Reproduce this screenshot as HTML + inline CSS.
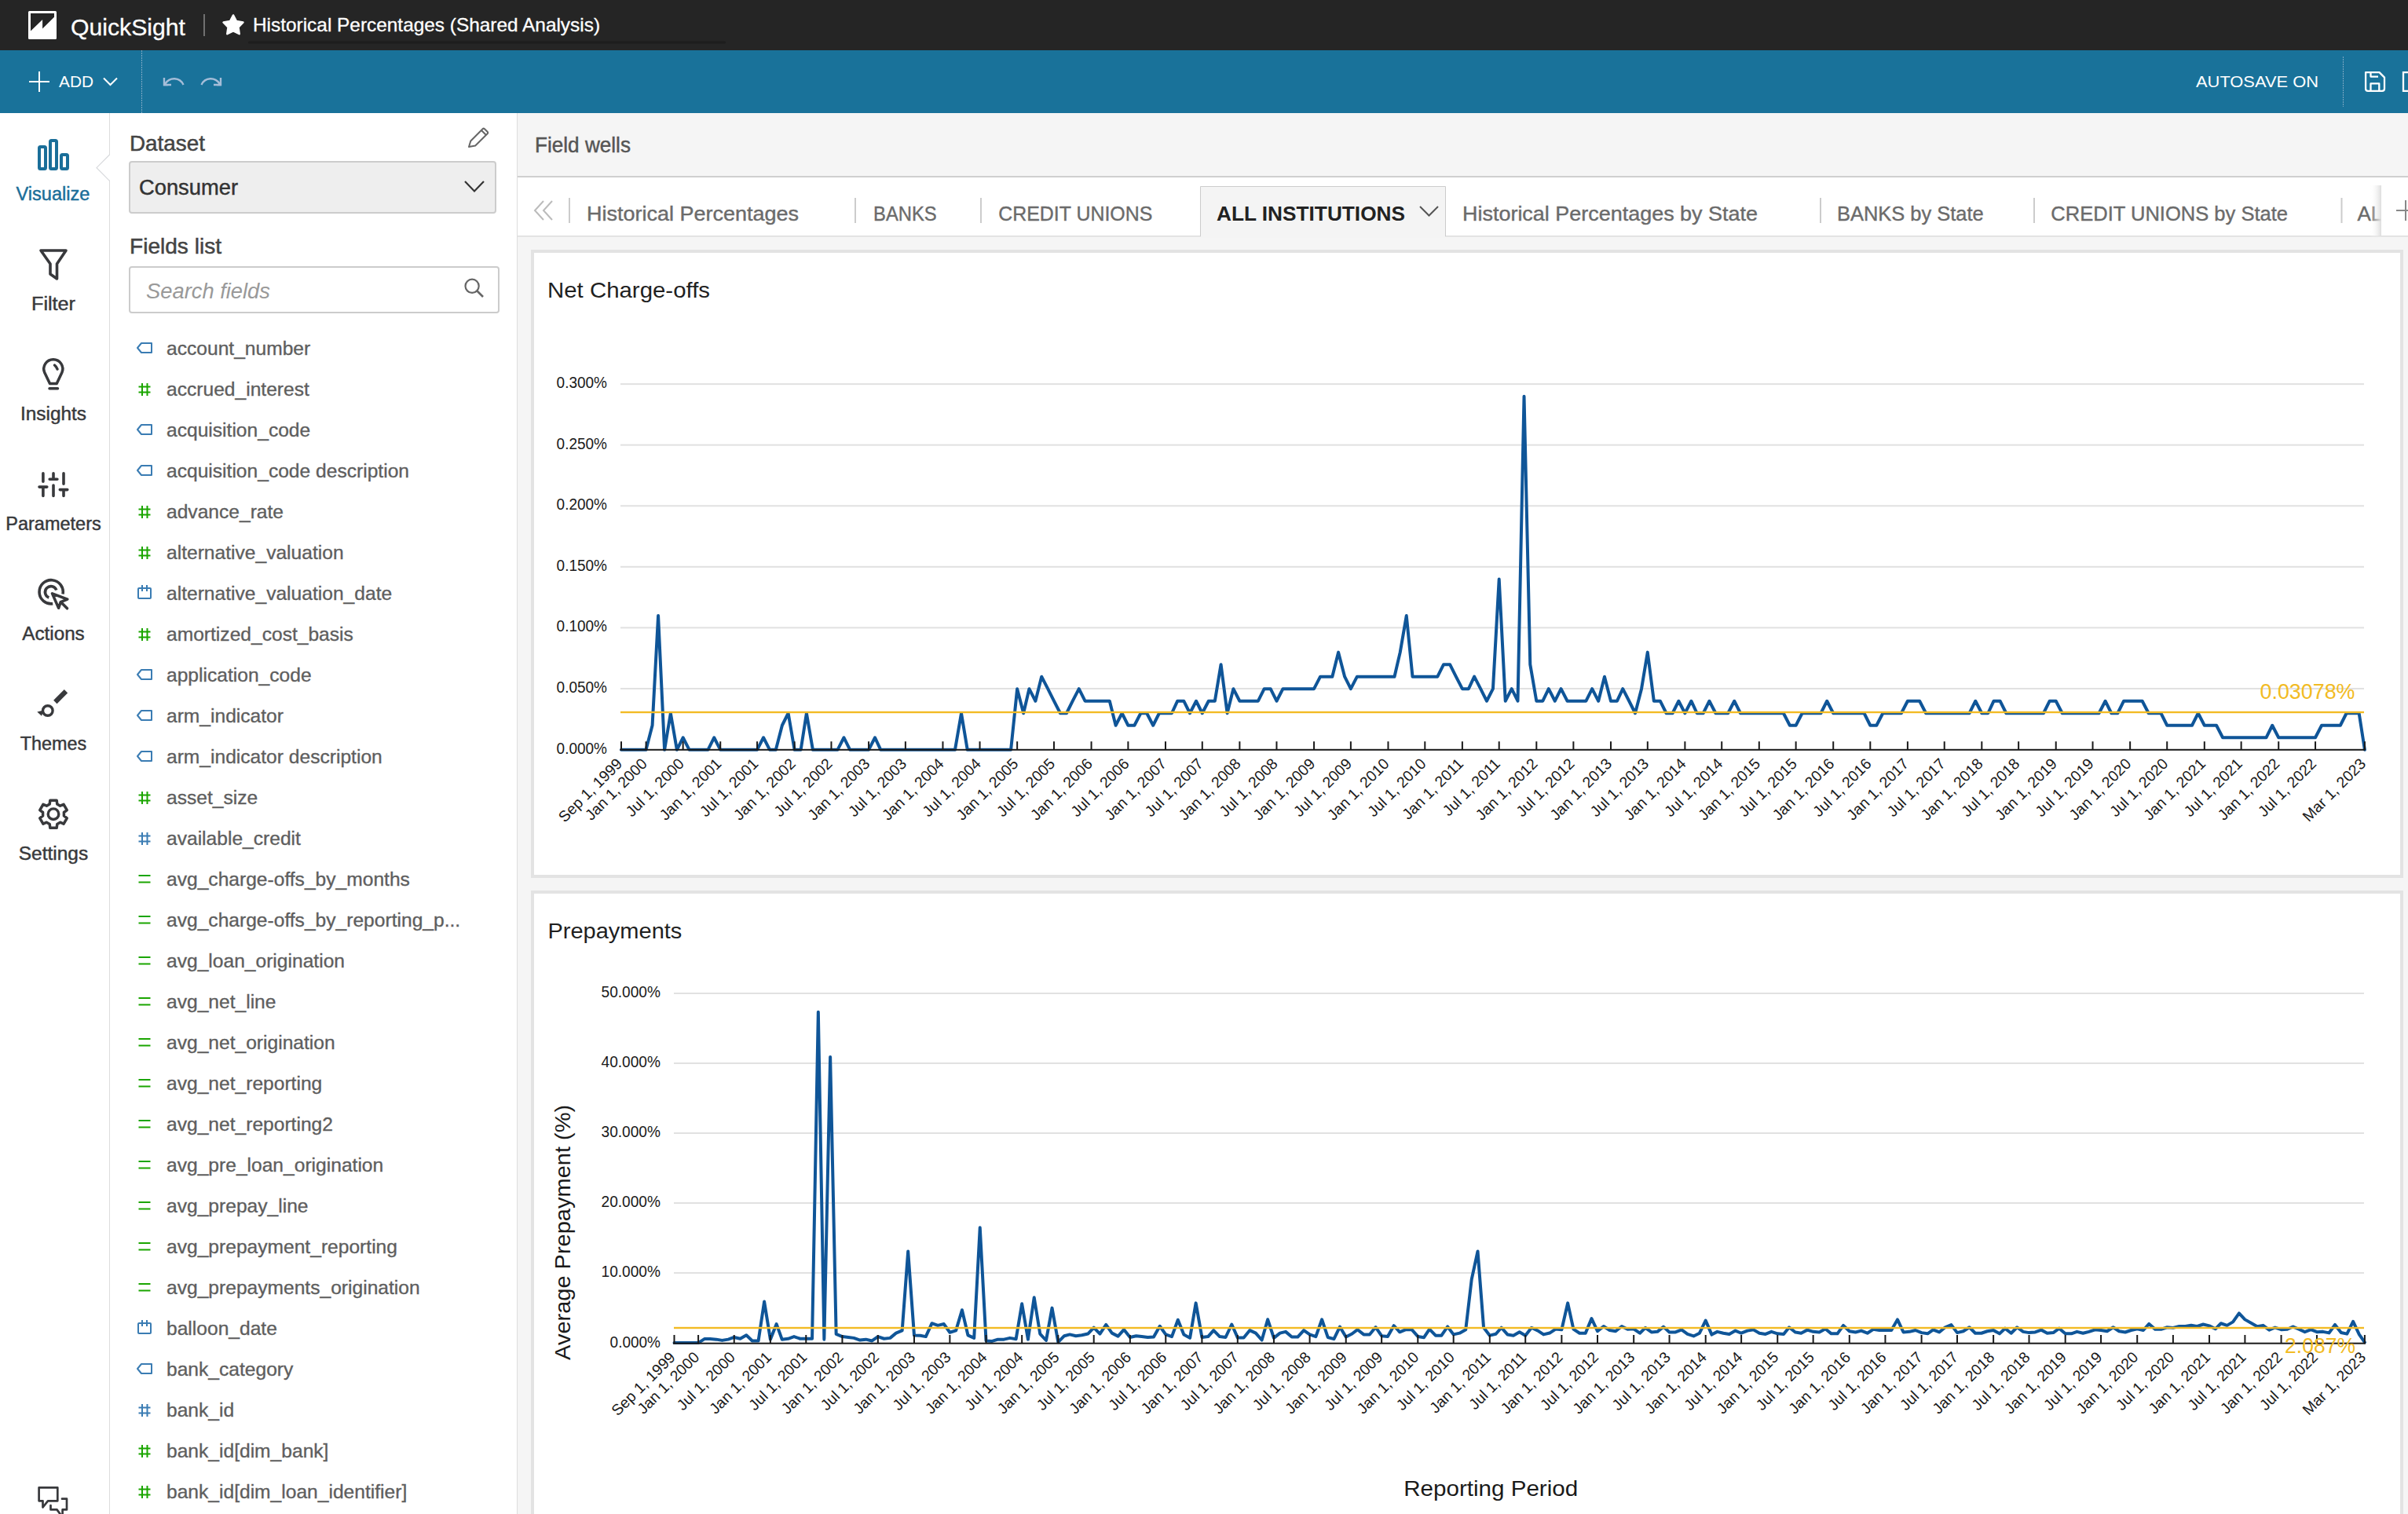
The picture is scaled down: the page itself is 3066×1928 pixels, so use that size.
<!DOCTYPE html>
<html><head><meta charset="utf-8"><title>QuickSight</title><style>html,body{margin:0;padding:0;width:3066px;height:1928px;overflow:hidden;background:#f4f4f4;font-family:"Liberation Sans",sans-serif}svg{display:block}</style></head><body>
<svg width="3066" height="1928" viewBox="0 0 3066 1928" font-family='"Liberation Sans", sans-serif'>
<rect x="0" y="0" width="3066" height="1928" fill="#f5f5f5"/>
<rect x="0" y="0" width="3066" height="64" fill="#252525"/>
<rect x="36" y="14" width="36" height="36" rx="1.5" fill="#ffffff"/>
<path d="M39,17 L69,17 L69,21.7 L54.1,36.6 L54.1,25 L39,39.6 Z" fill="#252525"/>
<text x="90" y="44.5" font-size="30" fill="#ffffff" stroke="#ffffff" stroke-width="0.3" textLength="146" lengthAdjust="spacingAndGlyphs">QuickSight</text>
<rect x="259" y="18" width="2" height="28" fill="#707070"/>
<polygon points="297.00,19.40 301.06,27.02 309.55,28.52 303.56,34.73 304.76,43.28 297.00,39.50 289.24,43.28 290.44,34.73 284.45,28.52 292.94,27.02" fill="#ffffff" stroke="#ffffff" stroke-width="2.4" stroke-linejoin="round"/>
<text x="322" y="40" font-size="24" fill="#ffffff" stroke="#ffffff" stroke-width="0.3" textLength="442" lengthAdjust="spacingAndGlyphs">Historical Percentages (Shared Analysis)</text>
<rect x="316" y="52.5" width="608" height="3" rx="1.5" fill="#1d1d1d"/>
<rect x="0" y="64" width="3066" height="80" fill="#19729a"/>
<path d="M50,91 V117 M37,104 H63" stroke="#ffffff" stroke-width="2" fill="none"/>
<text x="75" y="111" font-size="20" fill="#ffffff" textLength="44" lengthAdjust="spacingAndGlyphs">ADD</text>
<path d="M132,99.5 L140.5,108 L149,99.5" stroke="#ffffff" stroke-width="2" fill="none"/>
<line x1="180.5" y1="64" x2="180.5" y2="144" stroke="#7ea9c4" stroke-width="1" stroke-dasharray="2,1"/>
<path d="M209,99 V108 H218 M210.5,106.5 C216,98 229,98 233.5,108" stroke="#a5bdd8" stroke-width="2.4" fill="none"/>
<path d="M208,103 V109.2 H214 Z" fill="#a5bdd8"/>
<path d="M281,99 V108 H272 M279.5,106.5 C274,98 261,98 256.5,108" stroke="#a5bdd8" stroke-width="2.4" fill="none"/>
<path d="M282,103 V109.2 H276 Z" fill="#a5bdd8"/>
<text x="2796" y="111" font-size="20" fill="#ffffff" textLength="156" lengthAdjust="spacingAndGlyphs">AUTOSAVE ON</text>
<line x1="2983.5" y1="72" x2="2983.5" y2="136" stroke="#7ea9c4" stroke-width="1" stroke-dasharray="2,1"/>
<path d="M3012.1,92.1 H3029.5 L3036,98.6 V113 Q3036,115.9 3033,115.9 H3015 Q3012.1,115.9 3012.1,113 Z M3018.5,92 V97.6 H3028 M3018.5,116 V106.4 H3029.3 V116" stroke="#ffffff" stroke-width="2.3" fill="none" stroke-linejoin="round"/>
<path d="M3066,92.1 H3060 V115.9 H3066" stroke="#ffffff" stroke-width="2.3" fill="none"/>
<rect x="0" y="144" width="139" height="1784" fill="#ffffff"/>
<rect x="139" y="144" width="519" height="1784" fill="#ffffff"/>
<rect x="139" y="144" width="1" height="1784" fill="#dcdcdc"/>
<rect x="658" y="144" width="1" height="1784" fill="#dddddd"/>
<rect x="136" y="197.5" width="6" height="32" fill="#ffffff"/>
<path d="M139.5,197 L123,213.7 L139.5,230.3" fill="none" stroke="#d8dadd" stroke-width="1.2"/>
<rect x="50" y="187" width="8" height="28" rx="1.5" fill="none" stroke="#1a6e99" stroke-width="4"/>
<rect x="64" y="179" width="8" height="36" rx="1.5" fill="none" stroke="#1a6e99" stroke-width="4"/>
<rect x="78" y="197" width="8" height="18" rx="1.5" fill="none" stroke="#1a6e99" stroke-width="4"/>
<text x="67.5" y="255" font-size="23.5" fill="#1a6e99" stroke="#1a6e99" stroke-width="0.45" text-anchor="middle" textLength="94" lengthAdjust="spacingAndGlyphs">Visualize</text>
<path d="M52,319 L84,319 L72.5,336 L72.5,355 L64,349 L64,336 Z" fill="none" stroke="#38393c" stroke-width="3.6" stroke-linejoin="round"/>
<text x="68" y="394.6" font-size="23.5" fill="#38393c" stroke="#38393c" stroke-width="0.45" text-anchor="middle" textLength="56" lengthAdjust="spacingAndGlyphs">Filter</text>
<path d="M63.5,488.5 L56.8,474.5 A12,12 0 1 1 78.8,474.5 L72.2,488.5 Z" fill="none" stroke="#38393c" stroke-width="3.5" stroke-linejoin="round"/>
<path d="M63,494.8 H73.5 M69.5,465 Q72,467 73,470" stroke="#38393c" stroke-width="3.5" stroke-linecap="round" fill="none"/>
<text x="68" y="535" font-size="23.5" fill="#38393c" stroke="#38393c" stroke-width="0.45" text-anchor="middle" textLength="84" lengthAdjust="spacingAndGlyphs">Insights</text>
<path d="M54.9,602.7 V613.3 M50,620.1 H59.8 M54.9,620.1 V631.4 M68,602.7 V610.3 M63.2,610.3 H72.9 M68,618 V631.4 M81,602.7 V616.2 M76.3,623.6 H85.8 M81,623.6 V631.4" stroke="#38393c" stroke-width="3.6" stroke-linecap="round" fill="none"/>
<text x="68" y="675" font-size="23.5" fill="#38393c" stroke="#38393c" stroke-width="0.45" text-anchor="middle" textLength="121.5" lengthAdjust="spacingAndGlyphs">Parameters</text>
<path d="M67.2,768.7 A15.1,15.1 0 1 1 80,756.5" stroke="#38393c" stroke-width="3.6" fill="none"/>
<path d="M62.3,761 A7.4,7.4 0 1 1 71.8,751.5" stroke="#38393c" stroke-width="3.6" fill="none"/>
<path d="M66.5,755.8 L85.8,763.2 L77.3,766.6 L74.6,774.3 Z" stroke="#38393c" stroke-width="3.5" fill="none" stroke-linejoin="round"/>
<path d="M77.5,766.8 L85.5,774.8" stroke="#38393c" stroke-width="3.6" fill="none" stroke-linecap="round"/>
<text x="68" y="815" font-size="23.5" fill="#38393c" stroke="#38393c" stroke-width="0.45" text-anchor="middle" textLength="79.5" lengthAdjust="spacingAndGlyphs">Actions</text>
<path d="M70.3,894 L84,880.3" stroke="#38393c" stroke-width="6.2" stroke-linecap="butt" fill="none"/>
<circle cx="60.8" cy="905" r="6.3" stroke="#38393c" stroke-width="3.4" fill="none"/>
<path d="M55.5,904.5 L47.3,906.4 L53,911.8 Z" fill="#38393c"/>
<text x="68" y="955" font-size="23.5" fill="#38393c" stroke="#38393c" stroke-width="0.45" text-anchor="middle" textLength="84.5" lengthAdjust="spacingAndGlyphs">Themes</text>
<polygon points="63.81,1019.19 72.19,1019.19 72.79,1023.97 76.63,1026.19 81.06,1024.32 85.26,1031.58 81.42,1034.48 81.42,1038.92 85.26,1041.82 81.06,1049.08 76.63,1047.21 72.79,1049.43 72.19,1054.21 63.81,1054.21 63.21,1049.43 59.37,1047.21 54.94,1049.08 50.74,1041.82 54.58,1038.92 54.58,1034.48 50.74,1031.58 54.94,1024.32 59.37,1026.19 63.21,1023.97" fill="none" stroke="#38393c" stroke-width="3.5" stroke-linejoin="round"/>
<circle cx="68" cy="1036.7" r="6.8" fill="none" stroke="#38393c" stroke-width="3.4"/>
<text x="68" y="1095" font-size="23.5" fill="#38393c" stroke="#38393c" stroke-width="0.45" text-anchor="middle" textLength="88.4" lengthAdjust="spacingAndGlyphs">Settings</text>
<path d="M49.6,1894.4 H73.3 V1911.3 H61 L54.5,1919.5 V1911.3 H49.6 Z" stroke="#38393c" stroke-width="2.7" fill="none" stroke-linejoin="round"/>
<path d="M79,1908.7 H85 V1922.4 H79.6 V1930 M64.5,1917 V1922.4 H72.5 L78,1930" stroke="#38393c" stroke-width="2.7" fill="none" stroke-linejoin="round" stroke-linecap="round"/>
<text x="165" y="191.5" font-size="28" fill="#444444" stroke="#444444" stroke-width="0.5" textLength="96" lengthAdjust="spacingAndGlyphs">Dataset</text>
<path d="M597,187 L599.3,179.5 L614.5,164.2 Q615.7,163 617,164.2 L620.6,167.8 Q621.8,169 620.6,170.3 L605.2,185.5 Z M613,166 L618.5,171.5" stroke="#666" stroke-width="2" fill="none" stroke-linejoin="round"/>
<rect x="165" y="206" width="466" height="65" rx="3" fill="#eeeeee" stroke="#cccccc" stroke-width="2"/>
<text x="177" y="248" font-size="27" fill="#333333" stroke="#333333" stroke-width="0.45" textLength="126" lengthAdjust="spacingAndGlyphs">Consumer</text>
<path d="M592,231 L604,243.5 L616,231" stroke="#333" stroke-width="2.2" fill="none"/>
<text x="165" y="323" font-size="28" fill="#444444" stroke="#444444" stroke-width="0.5" textLength="117" lengthAdjust="spacingAndGlyphs">Fields list</text>
<rect x="165" y="340" width="470" height="58" rx="3" fill="#ffffff" stroke="#cccccc" stroke-width="2"/>
<text x="186" y="380" font-size="27" fill="#999999" font-style="italic" textLength="158" lengthAdjust="spacingAndGlyphs">Search fields</text>
<circle cx="601.1" cy="364.3" r="8.6" fill="none" stroke="#666" stroke-width="2.2"/><path d="M607.5,370.5 L615,378" stroke="#666" stroke-width="2.6" fill="none"/>
<path d="M175,443 L180,437 H193 V449 H180 Z" fill="none" stroke="#3a7cb3" stroke-width="2" stroke-linejoin="round"/>
<text x="212" y="452" font-size="24.6" fill="#5e5e5e" stroke="#5e5e5e" stroke-width="0.35">account_number</text>
<path d="M181,488 V504 M187.5,488 V504 M176.5,492.5 H191.5 M176.5,499.5 H191.5" stroke="#1aa500" stroke-width="2" fill="none"/>
<text x="212" y="504" font-size="24.6" fill="#5e5e5e" stroke="#5e5e5e" stroke-width="0.35">accrued_interest</text>
<path d="M175,547 L180,541 H193 V553 H180 Z" fill="none" stroke="#3a7cb3" stroke-width="2" stroke-linejoin="round"/>
<text x="212" y="556" font-size="24.6" fill="#5e5e5e" stroke="#5e5e5e" stroke-width="0.35">acquisition_code</text>
<path d="M175,599 L180,593 H193 V605 H180 Z" fill="none" stroke="#3a7cb3" stroke-width="2" stroke-linejoin="round"/>
<text x="212" y="608" font-size="24.6" fill="#5e5e5e" stroke="#5e5e5e" stroke-width="0.35">acquisition_code description</text>
<path d="M181,644 V660 M187.5,644 V660 M176.5,648.5 H191.5 M176.5,655.5 H191.5" stroke="#1aa500" stroke-width="2" fill="none"/>
<text x="212" y="660" font-size="24.6" fill="#5e5e5e" stroke="#5e5e5e" stroke-width="0.35">advance_rate</text>
<path d="M181,696 V712 M187.5,696 V712 M176.5,700.5 H191.5 M176.5,707.5 H191.5" stroke="#1aa500" stroke-width="2" fill="none"/>
<text x="212" y="712" font-size="24.6" fill="#5e5e5e" stroke="#5e5e5e" stroke-width="0.35">alternative_valuation</text>
<rect x="176" y="749" width="16" height="13" rx="1" fill="none" stroke="#3a7cb3" stroke-width="2"/>
<path d="M181,745 V753 M187,745 V753" stroke="#3a7cb3" stroke-width="2" fill="none"/>
<text x="212" y="764" font-size="24.6" fill="#5e5e5e" stroke="#5e5e5e" stroke-width="0.35">alternative_valuation_date</text>
<path d="M181,800 V816 M187.5,800 V816 M176.5,804.5 H191.5 M176.5,811.5 H191.5" stroke="#1aa500" stroke-width="2" fill="none"/>
<text x="212" y="816" font-size="24.6" fill="#5e5e5e" stroke="#5e5e5e" stroke-width="0.35">amortized_cost_basis</text>
<path d="M175,859 L180,853 H193 V865 H180 Z" fill="none" stroke="#3a7cb3" stroke-width="2" stroke-linejoin="round"/>
<text x="212" y="868" font-size="24.6" fill="#5e5e5e" stroke="#5e5e5e" stroke-width="0.35">application_code</text>
<path d="M175,911 L180,905 H193 V917 H180 Z" fill="none" stroke="#3a7cb3" stroke-width="2" stroke-linejoin="round"/>
<text x="212" y="920" font-size="24.6" fill="#5e5e5e" stroke="#5e5e5e" stroke-width="0.35">arm_indicator</text>
<path d="M175,963 L180,957 H193 V969 H180 Z" fill="none" stroke="#3a7cb3" stroke-width="2" stroke-linejoin="round"/>
<text x="212" y="972" font-size="24.6" fill="#5e5e5e" stroke="#5e5e5e" stroke-width="0.35">arm_indicator description</text>
<path d="M181,1008 V1024 M187.5,1008 V1024 M176.5,1012.5 H191.5 M176.5,1019.5 H191.5" stroke="#1aa500" stroke-width="2" fill="none"/>
<text x="212" y="1024" font-size="24.6" fill="#5e5e5e" stroke="#5e5e5e" stroke-width="0.35">asset_size</text>
<path d="M181,1060 V1076 M187.5,1060 V1076 M176.5,1064.5 H191.5 M176.5,1071.5 H191.5" stroke="#3a7cb3" stroke-width="2" fill="none"/>
<text x="212" y="1076" font-size="24.6" fill="#5e5e5e" stroke="#5e5e5e" stroke-width="0.35">available_credit</text>
<path d="M176.5,1115 H191.5 M176.5,1123.5 H191.5" stroke="#1aa500" stroke-width="2" fill="none"/>
<text x="212" y="1128" font-size="24.6" fill="#5e5e5e" stroke="#5e5e5e" stroke-width="0.35">avg_charge-offs_by_months</text>
<path d="M176.5,1167 H191.5 M176.5,1175.5 H191.5" stroke="#1aa500" stroke-width="2" fill="none"/>
<text x="212" y="1180" font-size="24.6" fill="#5e5e5e" stroke="#5e5e5e" stroke-width="0.35">avg_charge-offs_by_reporting_p...</text>
<path d="M176.5,1219 H191.5 M176.5,1227.5 H191.5" stroke="#1aa500" stroke-width="2" fill="none"/>
<text x="212" y="1232" font-size="24.6" fill="#5e5e5e" stroke="#5e5e5e" stroke-width="0.35">avg_loan_origination</text>
<path d="M176.5,1271 H191.5 M176.5,1279.5 H191.5" stroke="#1aa500" stroke-width="2" fill="none"/>
<text x="212" y="1284" font-size="24.6" fill="#5e5e5e" stroke="#5e5e5e" stroke-width="0.35">avg_net_line</text>
<path d="M176.5,1323 H191.5 M176.5,1331.5 H191.5" stroke="#1aa500" stroke-width="2" fill="none"/>
<text x="212" y="1336" font-size="24.6" fill="#5e5e5e" stroke="#5e5e5e" stroke-width="0.35">avg_net_origination</text>
<path d="M176.5,1375 H191.5 M176.5,1383.5 H191.5" stroke="#1aa500" stroke-width="2" fill="none"/>
<text x="212" y="1388" font-size="24.6" fill="#5e5e5e" stroke="#5e5e5e" stroke-width="0.35">avg_net_reporting</text>
<path d="M176.5,1427 H191.5 M176.5,1435.5 H191.5" stroke="#1aa500" stroke-width="2" fill="none"/>
<text x="212" y="1440" font-size="24.6" fill="#5e5e5e" stroke="#5e5e5e" stroke-width="0.35">avg_net_reporting2</text>
<path d="M176.5,1479 H191.5 M176.5,1487.5 H191.5" stroke="#1aa500" stroke-width="2" fill="none"/>
<text x="212" y="1492" font-size="24.6" fill="#5e5e5e" stroke="#5e5e5e" stroke-width="0.35">avg_pre_loan_origination</text>
<path d="M176.5,1531 H191.5 M176.5,1539.5 H191.5" stroke="#1aa500" stroke-width="2" fill="none"/>
<text x="212" y="1544" font-size="24.6" fill="#5e5e5e" stroke="#5e5e5e" stroke-width="0.35">avg_prepay_line</text>
<path d="M176.5,1583 H191.5 M176.5,1591.5 H191.5" stroke="#1aa500" stroke-width="2" fill="none"/>
<text x="212" y="1596" font-size="24.6" fill="#5e5e5e" stroke="#5e5e5e" stroke-width="0.35">avg_prepayment_reporting</text>
<path d="M176.5,1635 H191.5 M176.5,1643.5 H191.5" stroke="#1aa500" stroke-width="2" fill="none"/>
<text x="212" y="1648" font-size="24.6" fill="#5e5e5e" stroke="#5e5e5e" stroke-width="0.35">avg_prepayments_origination</text>
<rect x="176" y="1685" width="16" height="13" rx="1" fill="none" stroke="#3a7cb3" stroke-width="2"/>
<path d="M181,1681 V1689 M187,1681 V1689" stroke="#3a7cb3" stroke-width="2" fill="none"/>
<text x="212" y="1700" font-size="24.6" fill="#5e5e5e" stroke="#5e5e5e" stroke-width="0.35">balloon_date</text>
<path d="M175,1743 L180,1737 H193 V1749 H180 Z" fill="none" stroke="#3a7cb3" stroke-width="2" stroke-linejoin="round"/>
<text x="212" y="1752" font-size="24.6" fill="#5e5e5e" stroke="#5e5e5e" stroke-width="0.35">bank_category</text>
<path d="M181,1788 V1804 M187.5,1788 V1804 M176.5,1792.5 H191.5 M176.5,1799.5 H191.5" stroke="#3a7cb3" stroke-width="2" fill="none"/>
<text x="212" y="1804" font-size="24.6" fill="#5e5e5e" stroke="#5e5e5e" stroke-width="0.35">bank_id</text>
<path d="M181,1840 V1856 M187.5,1840 V1856 M176.5,1844.5 H191.5 M176.5,1851.5 H191.5" stroke="#1aa500" stroke-width="2" fill="none"/>
<text x="212" y="1856" font-size="24.6" fill="#5e5e5e" stroke="#5e5e5e" stroke-width="0.35">bank_id[dim_bank]</text>
<path d="M181,1892 V1908 M187.5,1892 V1908 M176.5,1896.5 H191.5 M176.5,1903.5 H191.5" stroke="#1aa500" stroke-width="2" fill="none"/>
<text x="212" y="1908" font-size="24.6" fill="#5e5e5e" stroke="#5e5e5e" stroke-width="0.35">bank_id[dim_loan_identifier]</text>
<rect x="659" y="144" width="2407" height="81" fill="#f5f5f5"/>
<text x="681" y="193.6" font-size="27" fill="#555555" stroke="#555555" stroke-width="0.45" textLength="122" lengthAdjust="spacingAndGlyphs">Field wells</text>
<rect x="659" y="224" width="2407" height="2" fill="#cfcfcf"/>
<rect x="659" y="226" width="2407" height="74" fill="#ffffff"/>
<rect x="659" y="300" width="2407" height="1.5" fill="#dddddd"/>
<path d="M692,256 L681,268 L692,280 M703,256 L692,268 L703,280" stroke="#bbbbbb" stroke-width="2" fill="none"/>
<rect x="724" y="252" width="2" height="32" fill="#cccccc"/>
<rect x="1088" y="252" width="2" height="32" fill="#cccccc"/>
<rect x="1248" y="252" width="2" height="32" fill="#cccccc"/>
<rect x="2317" y="252" width="2" height="32" fill="#cccccc"/>
<rect x="2589" y="252" width="2" height="32" fill="#cccccc"/>
<rect x="2980.5" y="252" width="2" height="32" fill="#cccccc"/>
<text x="747" y="281" font-size="26" fill="#6b6b6b" stroke="#6b6b6b" stroke-width="0.4" textLength="270" lengthAdjust="spacingAndGlyphs">Historical Percentages</text>
<text x="1112" y="281" font-size="26" fill="#6b6b6b" stroke="#6b6b6b" stroke-width="0.4" textLength="80.7" lengthAdjust="spacingAndGlyphs">BANKS</text>
<text x="1271.3" y="281" font-size="26" fill="#6b6b6b" stroke="#6b6b6b" stroke-width="0.4" textLength="196" lengthAdjust="spacingAndGlyphs">CREDIT UNIONS</text>
<path d="M1528.5,301 V237.5 H1840.5 V301" fill="#f4f4f4" stroke="#cccccc" stroke-width="1"/>
<rect x="1529" y="299.5" width="311" height="3" fill="#f4f4f4"/>
<text x="1549" y="281" font-size="26" fill="#222222" font-weight="bold" textLength="240" lengthAdjust="spacingAndGlyphs">ALL INSTITUTIONS</text>
<path d="M1808,263 L1819.5,274.5 L1831,263" stroke="#555" stroke-width="2" fill="none"/>
<text x="1862" y="281" font-size="26" fill="#6b6b6b" stroke="#6b6b6b" stroke-width="0.4" textLength="376" lengthAdjust="spacingAndGlyphs">Historical Percentages by State</text>
<text x="2339" y="281" font-size="26" fill="#6b6b6b" stroke="#6b6b6b" stroke-width="0.4" textLength="186.6" lengthAdjust="spacingAndGlyphs">BANKS by State</text>
<text x="2611.3" y="281" font-size="26" fill="#6b6b6b" stroke="#6b6b6b" stroke-width="0.4" textLength="301.7" lengthAdjust="spacingAndGlyphs">CREDIT UNIONS by State</text>
<clipPath id="alclip"><rect x="2990" y="226" width="42" height="74"/></clipPath>
<text x="3001.5" y="281" font-size="26" fill="#6b6b6b" stroke="#6b6b6b" stroke-width="0.4" clip-path="url(#alclip)">ALL</text>
<defs><linearGradient id="fade" x1="0" x2="1" y1="0" y2="0"><stop offset="0" stop-color="#ffffff" stop-opacity="0"/><stop offset="1" stop-color="#dddddd"/></linearGradient></defs>
<rect x="3018" y="236" width="14" height="65" fill="url(#fade)"/>
<path d="M3051,268 H3066 M3063,255 V281" stroke="#888" stroke-width="2" fill="none"/>
<rect x="678" y="320" width="2380" height="796" fill="#ffffff" stroke="#e3e3e3" stroke-width="4"/>
<rect x="678" y="1136" width="2380" height="900" fill="#ffffff" stroke="#e3e3e3" stroke-width="4"/>
<text x="697" y="379" font-size="28.5" fill="#1f1f1f" textLength="207" lengthAdjust="spacingAndGlyphs">Net Charge-offs</text>
<text x="697.4" y="1195" font-size="28.5" fill="#1f1f1f" textLength="171" lengthAdjust="spacingAndGlyphs">Prepayments</text>
<rect x="790" y="488.10" width="2220" height="2" fill="#e1e1e1"/>
<text x="773" y="494.1" font-size="19.5" fill="#1a1a1a" text-anchor="end" textLength="64.4" lengthAdjust="spacingAndGlyphs">0.300%</text>
<rect x="790" y="565.67" width="2220" height="2" fill="#e1e1e1"/>
<text x="773" y="571.67" font-size="19.5" fill="#1a1a1a" text-anchor="end" textLength="64.4" lengthAdjust="spacingAndGlyphs">0.250%</text>
<rect x="790" y="643.24" width="2220" height="2" fill="#e1e1e1"/>
<text x="773" y="649.24" font-size="19.5" fill="#1a1a1a" text-anchor="end" textLength="64.4" lengthAdjust="spacingAndGlyphs">0.200%</text>
<rect x="790" y="720.81" width="2220" height="2" fill="#e1e1e1"/>
<text x="773" y="726.81" font-size="19.5" fill="#1a1a1a" text-anchor="end" textLength="64.4" lengthAdjust="spacingAndGlyphs">0.150%</text>
<rect x="790" y="798.38" width="2220" height="2" fill="#e1e1e1"/>
<text x="773" y="804.38" font-size="19.5" fill="#1a1a1a" text-anchor="end" textLength="64.4" lengthAdjust="spacingAndGlyphs">0.100%</text>
<rect x="790" y="875.95" width="2220" height="2" fill="#e1e1e1"/>
<text x="773" y="881.95" font-size="19.5" fill="#1a1a1a" text-anchor="end" textLength="64.4" lengthAdjust="spacingAndGlyphs">0.050%</text>
<text x="773" y="959.5" font-size="19.5" fill="#1a1a1a" text-anchor="end" textLength="64.4" lengthAdjust="spacingAndGlyphs">0.000%</text>
<polyline points="791.00,954.80 798.76,954.80 806.78,954.80 814.54,954.80 822.56,954.80 830.58,923.76 838.08,784.08 846.10,954.80 853.86,908.24 861.88,954.80 869.64,939.28 877.65,954.80 885.67,954.80 893.43,954.80 901.45,954.80 909.21,939.28 917.23,954.80 925.25,954.80 932.49,954.80 940.51,954.80 948.27,954.80 956.29,954.80 964.05,954.80 972.07,939.28 980.09,954.80 987.85,954.80 995.87,923.76 1003.63,908.24 1011.64,954.80 1019.66,954.80 1026.91,908.24 1034.93,954.80 1042.69,954.80 1050.70,954.80 1058.46,954.80 1066.48,954.80 1074.50,939.28 1082.26,954.80 1090.28,954.80 1098.04,954.80 1106.06,954.80 1114.08,939.28 1121.32,954.80 1129.34,954.80 1137.10,954.80 1145.12,954.80 1152.88,954.80 1160.90,954.80 1168.92,954.80 1176.68,954.80 1184.69,954.80 1192.45,954.80 1200.47,954.80 1208.49,954.80 1215.99,954.80 1224.01,908.24 1231.77,954.80 1239.79,954.80 1247.55,954.80 1255.57,954.80 1263.59,954.80 1271.35,954.80 1279.37,954.80 1287.13,954.80 1295.15,877.20 1303.17,908.24 1310.41,877.20 1318.43,892.72 1326.19,861.68 1334.21,877.20 1341.97,892.72 1349.98,908.24 1358.00,908.24 1365.76,892.72 1373.78,877.20 1381.54,892.72 1389.56,892.72 1397.58,892.72 1404.82,892.72 1412.84,892.72 1420.60,923.76 1428.62,908.24 1436.38,923.76 1444.40,923.76 1452.42,908.24 1460.18,908.24 1468.20,923.76 1475.96,908.24 1483.98,908.24 1491.99,908.24 1499.24,892.72 1507.26,892.72 1515.02,908.24 1523.03,892.72 1530.79,908.24 1538.81,892.72 1546.83,892.72 1554.59,846.16 1562.61,908.24 1570.37,877.20 1578.39,892.72 1586.41,892.72 1593.91,892.72 1601.93,892.72 1609.69,877.20 1617.71,877.20 1625.47,892.72 1633.49,877.20 1641.50,877.20 1649.26,877.20 1657.28,877.20 1665.04,877.20 1673.06,877.20 1681.08,861.68 1688.32,861.68 1696.34,861.68 1704.10,830.64 1712.12,861.68 1719.88,877.20 1727.90,861.68 1735.92,861.68 1743.68,861.68 1751.70,861.68 1759.46,861.68 1767.48,861.68 1775.50,861.68 1782.74,830.64 1790.76,784.08 1798.52,861.68 1806.54,861.68 1814.30,861.68 1822.31,861.68 1830.33,861.68 1838.09,846.16 1846.11,846.16 1853.87,861.68 1861.89,877.20 1869.91,877.20 1877.15,861.68 1885.17,877.20 1892.93,892.72 1900.95,877.20 1908.71,737.52 1916.73,892.72 1924.75,877.20 1932.51,892.72 1940.53,504.72 1948.29,846.16 1956.31,892.72 1964.32,892.72 1971.83,877.20 1979.84,892.72 1987.60,877.20 1995.62,892.72 2003.38,892.72 2011.40,892.72 2019.42,892.72 2027.18,877.20 2035.20,892.72 2042.96,861.68 2050.98,892.72 2059.00,892.72 2066.24,877.20 2074.26,892.72 2082.02,908.24 2090.04,877.20 2097.80,830.64 2105.82,892.72 2113.83,892.72 2121.59,908.24 2129.61,908.24 2137.37,892.72 2145.39,908.24 2153.41,892.72 2160.65,908.24 2168.67,908.24 2176.43,892.72 2184.45,908.24 2192.21,908.24 2200.23,908.24 2208.25,892.72 2216.01,908.24 2224.03,908.24 2231.79,908.24 2239.81,908.24 2247.83,908.24 2255.07,908.24 2263.09,908.24 2270.85,908.24 2278.87,923.76 2286.63,923.76 2294.64,908.24 2302.66,908.24 2310.42,908.24 2318.44,908.24 2326.20,892.72 2334.22,908.24 2342.24,908.24 2349.74,908.24 2357.76,908.24 2365.52,908.24 2373.54,908.24 2381.30,923.76 2389.32,923.76 2397.34,908.24 2405.10,908.24 2413.12,908.24 2420.88,908.24 2428.89,892.72 2436.91,892.72 2444.16,892.72 2452.17,908.24 2459.93,908.24 2467.95,908.24 2475.71,908.24 2483.73,908.24 2491.75,908.24 2499.51,908.24 2507.53,908.24 2515.29,892.72 2523.31,908.24 2531.33,908.24 2538.57,892.72 2546.59,892.72 2554.35,908.24 2562.37,908.24 2570.13,908.24 2578.15,908.24 2586.16,908.24 2593.93,908.24 2601.94,908.24 2609.70,892.72 2617.72,892.72 2625.74,908.24 2632.98,908.24 2641.00,908.24 2648.76,908.24 2656.78,908.24 2664.54,908.24 2672.56,908.24 2680.58,892.72 2688.34,908.24 2696.36,908.24 2704.12,892.72 2712.14,892.72 2720.16,892.72 2727.66,892.72 2735.68,908.24 2743.44,908.24 2751.45,908.24 2759.21,923.76 2767.23,923.76 2775.25,923.76 2783.01,923.76 2791.03,923.76 2798.79,908.24 2806.81,923.76 2814.83,923.76 2822.07,923.76 2830.09,939.28 2837.85,939.28 2845.87,939.28 2853.63,939.28 2861.65,939.28 2869.67,939.28 2877.43,939.28 2885.45,939.28 2893.21,923.76 2901.22,939.28 2909.24,939.28 2916.49,939.28 2924.50,939.28 2932.26,939.28 2940.28,939.28 2948.04,939.28 2956.06,923.76 2964.08,923.76 2971.84,923.76 2979.86,923.76 2987.62,908.24 2995.64,908.24 3003.66,908.24 3010.90,954.80" fill="none" stroke="#0f5598" stroke-width="4" stroke-linejoin="round" stroke-linecap="round"/>
<rect x="790" y="905.8" width="2220" height="2.4" fill="#f2bb24"/>
<rect x="789.5" y="953.8" width="2222" height="2" fill="#1a1a1a"/>
<rect x="790.00" y="944.2" width="2" height="10.6" fill="#1a1a1a"/>
<text x="0" y="0" font-size="19.5" fill="#1a1a1a" text-anchor="end" transform="translate(793.50,973.80) rotate(-45)">Sep 1, 1999</text>
<rect x="821.56" y="944.2" width="2" height="10.6" fill="#1a1a1a"/>
<text x="0" y="0" font-size="19.5" fill="#1a1a1a" text-anchor="end" transform="translate(825.06,973.80) rotate(-45)">Jan 1, 2000</text>
<rect x="868.64" y="944.2" width="2" height="10.6" fill="#1a1a1a"/>
<text x="0" y="0" font-size="19.5" fill="#1a1a1a" text-anchor="end" transform="translate(872.14,973.80) rotate(-45)">Jul 1, 2000</text>
<rect x="916.23" y="944.2" width="2" height="10.6" fill="#1a1a1a"/>
<text x="0" y="0" font-size="19.5" fill="#1a1a1a" text-anchor="end" transform="translate(919.73,973.80) rotate(-45)">Jan 1, 2001</text>
<rect x="963.05" y="944.2" width="2" height="10.6" fill="#1a1a1a"/>
<text x="0" y="0" font-size="19.5" fill="#1a1a1a" text-anchor="end" transform="translate(966.55,973.80) rotate(-45)">Jul 1, 2001</text>
<rect x="1010.64" y="944.2" width="2" height="10.6" fill="#1a1a1a"/>
<text x="0" y="0" font-size="19.5" fill="#1a1a1a" text-anchor="end" transform="translate(1014.14,973.80) rotate(-45)">Jan 1, 2002</text>
<rect x="1057.46" y="944.2" width="2" height="10.6" fill="#1a1a1a"/>
<text x="0" y="0" font-size="19.5" fill="#1a1a1a" text-anchor="end" transform="translate(1060.96,973.80) rotate(-45)">Jul 1, 2002</text>
<rect x="1105.06" y="944.2" width="2" height="10.6" fill="#1a1a1a"/>
<text x="0" y="0" font-size="19.5" fill="#1a1a1a" text-anchor="end" transform="translate(1108.56,973.80) rotate(-45)">Jan 1, 2003</text>
<rect x="1151.88" y="944.2" width="2" height="10.6" fill="#1a1a1a"/>
<text x="0" y="0" font-size="19.5" fill="#1a1a1a" text-anchor="end" transform="translate(1155.38,973.80) rotate(-45)">Jul 1, 2003</text>
<rect x="1199.47" y="944.2" width="2" height="10.6" fill="#1a1a1a"/>
<text x="0" y="0" font-size="19.5" fill="#1a1a1a" text-anchor="end" transform="translate(1202.97,973.80) rotate(-45)">Jan 1, 2004</text>
<rect x="1246.55" y="944.2" width="2" height="10.6" fill="#1a1a1a"/>
<text x="0" y="0" font-size="19.5" fill="#1a1a1a" text-anchor="end" transform="translate(1250.05,973.80) rotate(-45)">Jul 1, 2004</text>
<rect x="1294.15" y="944.2" width="2" height="10.6" fill="#1a1a1a"/>
<text x="0" y="0" font-size="19.5" fill="#1a1a1a" text-anchor="end" transform="translate(1297.65,973.80) rotate(-45)">Jan 1, 2005</text>
<rect x="1340.97" y="944.2" width="2" height="10.6" fill="#1a1a1a"/>
<text x="0" y="0" font-size="19.5" fill="#1a1a1a" text-anchor="end" transform="translate(1344.47,973.80) rotate(-45)">Jul 1, 2005</text>
<rect x="1388.56" y="944.2" width="2" height="10.6" fill="#1a1a1a"/>
<text x="0" y="0" font-size="19.5" fill="#1a1a1a" text-anchor="end" transform="translate(1392.06,973.80) rotate(-45)">Jan 1, 2006</text>
<rect x="1435.38" y="944.2" width="2" height="10.6" fill="#1a1a1a"/>
<text x="0" y="0" font-size="19.5" fill="#1a1a1a" text-anchor="end" transform="translate(1438.88,973.80) rotate(-45)">Jul 1, 2006</text>
<rect x="1482.98" y="944.2" width="2" height="10.6" fill="#1a1a1a"/>
<text x="0" y="0" font-size="19.5" fill="#1a1a1a" text-anchor="end" transform="translate(1486.48,973.80) rotate(-45)">Jan 1, 2007</text>
<rect x="1529.79" y="944.2" width="2" height="10.6" fill="#1a1a1a"/>
<text x="0" y="0" font-size="19.5" fill="#1a1a1a" text-anchor="end" transform="translate(1533.29,973.80) rotate(-45)">Jul 1, 2007</text>
<rect x="1577.39" y="944.2" width="2" height="10.6" fill="#1a1a1a"/>
<text x="0" y="0" font-size="19.5" fill="#1a1a1a" text-anchor="end" transform="translate(1580.89,973.80) rotate(-45)">Jan 1, 2008</text>
<rect x="1624.47" y="944.2" width="2" height="10.6" fill="#1a1a1a"/>
<text x="0" y="0" font-size="19.5" fill="#1a1a1a" text-anchor="end" transform="translate(1627.97,973.80) rotate(-45)">Jul 1, 2008</text>
<rect x="1672.06" y="944.2" width="2" height="10.6" fill="#1a1a1a"/>
<text x="0" y="0" font-size="19.5" fill="#1a1a1a" text-anchor="end" transform="translate(1675.56,973.80) rotate(-45)">Jan 1, 2009</text>
<rect x="1718.88" y="944.2" width="2" height="10.6" fill="#1a1a1a"/>
<text x="0" y="0" font-size="19.5" fill="#1a1a1a" text-anchor="end" transform="translate(1722.38,973.80) rotate(-45)">Jul 1, 2009</text>
<rect x="1766.48" y="944.2" width="2" height="10.6" fill="#1a1a1a"/>
<text x="0" y="0" font-size="19.5" fill="#1a1a1a" text-anchor="end" transform="translate(1769.98,973.80) rotate(-45)">Jan 1, 2010</text>
<rect x="1813.30" y="944.2" width="2" height="10.6" fill="#1a1a1a"/>
<text x="0" y="0" font-size="19.5" fill="#1a1a1a" text-anchor="end" transform="translate(1816.80,973.80) rotate(-45)">Jul 1, 2010</text>
<rect x="1860.89" y="944.2" width="2" height="10.6" fill="#1a1a1a"/>
<text x="0" y="0" font-size="19.5" fill="#1a1a1a" text-anchor="end" transform="translate(1864.39,973.80) rotate(-45)">Jan 1, 2011</text>
<rect x="1907.71" y="944.2" width="2" height="10.6" fill="#1a1a1a"/>
<text x="0" y="0" font-size="19.5" fill="#1a1a1a" text-anchor="end" transform="translate(1911.21,973.80) rotate(-45)">Jul 1, 2011</text>
<rect x="1955.31" y="944.2" width="2" height="10.6" fill="#1a1a1a"/>
<text x="0" y="0" font-size="19.5" fill="#1a1a1a" text-anchor="end" transform="translate(1958.81,973.80) rotate(-45)">Jan 1, 2012</text>
<rect x="2002.38" y="944.2" width="2" height="10.6" fill="#1a1a1a"/>
<text x="0" y="0" font-size="19.5" fill="#1a1a1a" text-anchor="end" transform="translate(2005.88,973.80) rotate(-45)">Jul 1, 2012</text>
<rect x="2049.98" y="944.2" width="2" height="10.6" fill="#1a1a1a"/>
<text x="0" y="0" font-size="19.5" fill="#1a1a1a" text-anchor="end" transform="translate(2053.48,973.80) rotate(-45)">Jan 1, 2013</text>
<rect x="2096.80" y="944.2" width="2" height="10.6" fill="#1a1a1a"/>
<text x="0" y="0" font-size="19.5" fill="#1a1a1a" text-anchor="end" transform="translate(2100.30,973.80) rotate(-45)">Jul 1, 2013</text>
<rect x="2144.39" y="944.2" width="2" height="10.6" fill="#1a1a1a"/>
<text x="0" y="0" font-size="19.5" fill="#1a1a1a" text-anchor="end" transform="translate(2147.89,973.80) rotate(-45)">Jan 1, 2014</text>
<rect x="2191.21" y="944.2" width="2" height="10.6" fill="#1a1a1a"/>
<text x="0" y="0" font-size="19.5" fill="#1a1a1a" text-anchor="end" transform="translate(2194.71,973.80) rotate(-45)">Jul 1, 2014</text>
<rect x="2238.81" y="944.2" width="2" height="10.6" fill="#1a1a1a"/>
<text x="0" y="0" font-size="19.5" fill="#1a1a1a" text-anchor="end" transform="translate(2242.31,973.80) rotate(-45)">Jan 1, 2015</text>
<rect x="2285.63" y="944.2" width="2" height="10.6" fill="#1a1a1a"/>
<text x="0" y="0" font-size="19.5" fill="#1a1a1a" text-anchor="end" transform="translate(2289.13,973.80) rotate(-45)">Jul 1, 2015</text>
<rect x="2333.22" y="944.2" width="2" height="10.6" fill="#1a1a1a"/>
<text x="0" y="0" font-size="19.5" fill="#1a1a1a" text-anchor="end" transform="translate(2336.72,973.80) rotate(-45)">Jan 1, 2016</text>
<rect x="2380.30" y="944.2" width="2" height="10.6" fill="#1a1a1a"/>
<text x="0" y="0" font-size="19.5" fill="#1a1a1a" text-anchor="end" transform="translate(2383.80,973.80) rotate(-45)">Jul 1, 2016</text>
<rect x="2427.89" y="944.2" width="2" height="10.6" fill="#1a1a1a"/>
<text x="0" y="0" font-size="19.5" fill="#1a1a1a" text-anchor="end" transform="translate(2431.39,973.80) rotate(-45)">Jan 1, 2017</text>
<rect x="2474.71" y="944.2" width="2" height="10.6" fill="#1a1a1a"/>
<text x="0" y="0" font-size="19.5" fill="#1a1a1a" text-anchor="end" transform="translate(2478.21,973.80) rotate(-45)">Jul 1, 2017</text>
<rect x="2522.31" y="944.2" width="2" height="10.6" fill="#1a1a1a"/>
<text x="0" y="0" font-size="19.5" fill="#1a1a1a" text-anchor="end" transform="translate(2525.81,973.80) rotate(-45)">Jan 1, 2018</text>
<rect x="2569.13" y="944.2" width="2" height="10.6" fill="#1a1a1a"/>
<text x="0" y="0" font-size="19.5" fill="#1a1a1a" text-anchor="end" transform="translate(2572.63,973.80) rotate(-45)">Jul 1, 2018</text>
<rect x="2616.72" y="944.2" width="2" height="10.6" fill="#1a1a1a"/>
<text x="0" y="0" font-size="19.5" fill="#1a1a1a" text-anchor="end" transform="translate(2620.22,973.80) rotate(-45)">Jan 1, 2019</text>
<rect x="2663.54" y="944.2" width="2" height="10.6" fill="#1a1a1a"/>
<text x="0" y="0" font-size="19.5" fill="#1a1a1a" text-anchor="end" transform="translate(2667.04,973.80) rotate(-45)">Jul 1, 2019</text>
<rect x="2711.14" y="944.2" width="2" height="10.6" fill="#1a1a1a"/>
<text x="0" y="0" font-size="19.5" fill="#1a1a1a" text-anchor="end" transform="translate(2714.64,973.80) rotate(-45)">Jan 1, 2020</text>
<rect x="2758.21" y="944.2" width="2" height="10.6" fill="#1a1a1a"/>
<text x="0" y="0" font-size="19.5" fill="#1a1a1a" text-anchor="end" transform="translate(2761.71,973.80) rotate(-45)">Jul 1, 2020</text>
<rect x="2805.81" y="944.2" width="2" height="10.6" fill="#1a1a1a"/>
<text x="0" y="0" font-size="19.5" fill="#1a1a1a" text-anchor="end" transform="translate(2809.31,973.80) rotate(-45)">Jan 1, 2021</text>
<rect x="2852.63" y="944.2" width="2" height="10.6" fill="#1a1a1a"/>
<text x="0" y="0" font-size="19.5" fill="#1a1a1a" text-anchor="end" transform="translate(2856.13,973.80) rotate(-45)">Jul 1, 2021</text>
<rect x="2900.22" y="944.2" width="2" height="10.6" fill="#1a1a1a"/>
<text x="0" y="0" font-size="19.5" fill="#1a1a1a" text-anchor="end" transform="translate(2903.72,973.80) rotate(-45)">Jan 1, 2022</text>
<rect x="2947.04" y="944.2" width="2" height="10.6" fill="#1a1a1a"/>
<text x="0" y="0" font-size="19.5" fill="#1a1a1a" text-anchor="end" transform="translate(2950.54,973.80) rotate(-45)">Jul 1, 2022</text>
<rect x="3009.90" y="944.2" width="2" height="10.6" fill="#1a1a1a"/>
<text x="0" y="0" font-size="19.5" fill="#1a1a1a" text-anchor="end" transform="translate(3013.40,973.80) rotate(-45)">Mar 1, 2023</text>
<text x="2998.5" y="890.1" font-size="27" fill="#f2bb24" text-anchor="end" textLength="121" lengthAdjust="spacingAndGlyphs">0.03078%</text>
<rect x="858" y="1264.00" width="2152" height="2" fill="#e1e1e1"/>
<text x="841" y="1270" font-size="19.5" fill="#1a1a1a" text-anchor="end" textLength="75.5" lengthAdjust="spacingAndGlyphs">50.000%</text>
<rect x="858" y="1353.00" width="2152" height="2" fill="#e1e1e1"/>
<text x="841" y="1359" font-size="19.5" fill="#1a1a1a" text-anchor="end" textLength="75.5" lengthAdjust="spacingAndGlyphs">40.000%</text>
<rect x="858" y="1442.00" width="2152" height="2" fill="#e1e1e1"/>
<text x="841" y="1448" font-size="19.5" fill="#1a1a1a" text-anchor="end" textLength="75.5" lengthAdjust="spacingAndGlyphs">30.000%</text>
<rect x="858" y="1531.00" width="2152" height="2" fill="#e1e1e1"/>
<text x="841" y="1537" font-size="19.5" fill="#1a1a1a" text-anchor="end" textLength="75.5" lengthAdjust="spacingAndGlyphs">20.000%</text>
<rect x="858" y="1620.00" width="2152" height="2" fill="#e1e1e1"/>
<text x="841" y="1626" font-size="19.5" fill="#1a1a1a" text-anchor="end" textLength="75.5" lengthAdjust="spacingAndGlyphs">10.000%</text>
<text x="841" y="1715.5" font-size="19.5" fill="#1a1a1a" text-anchor="end" textLength="64.4" lengthAdjust="spacingAndGlyphs">0.000%</text>
<polyline points="858.50,1710.10 866.02,1710.10 873.80,1710.10 881.32,1710.10 889.10,1710.10 896.87,1705.12 904.15,1705.12 911.92,1705.65 919.45,1706.90 927.22,1705.65 934.74,1702.98 942.52,1704.76 950.29,1700.31 957.82,1707.43 965.59,1707.43 973.12,1657.59 980.89,1705.65 988.67,1686.07 995.69,1705.65 1003.46,1704.76 1010.99,1702.09 1018.76,1704.76 1026.29,1704.76 1034.06,1704.76 1041.84,1288.68 1049.36,1705.65 1057.14,1346.09 1064.66,1698.89 1072.44,1702.09 1080.21,1702.98 1087.23,1703.87 1095.01,1706.54 1102.53,1705.65 1110.31,1707.43 1117.83,1702.09 1125.61,1704.76 1133.38,1703.87 1140.91,1697.64 1148.68,1694.44 1156.20,1593.51 1163.98,1700.49 1171.75,1700.75 1178.78,1702.09 1186.55,1685.18 1194.08,1687.85 1201.85,1686.07 1209.37,1696.75 1217.15,1694.44 1224.92,1668.27 1232.45,1700.31 1240.22,1703.87 1247.75,1563.25 1255.52,1707.43 1263.30,1707.88 1270.57,1705.65 1278.35,1705.65 1285.87,1703.87 1293.64,1705.20 1301.17,1660.26 1308.94,1705.65 1316.72,1652.25 1324.24,1698.53 1332.02,1706.98 1339.54,1665.60 1347.32,1709.21 1355.09,1701.20 1362.11,1699.42 1369.89,1701.20 1377.41,1700.31 1385.19,1698.53 1392.71,1690.52 1400.49,1698.53 1408.26,1686.96 1415.79,1697.64 1423.56,1701.64 1431.09,1693.19 1438.86,1702.98 1446.64,1701.20 1453.66,1702.09 1461.43,1702.98 1468.96,1702.53 1476.73,1688.74 1484.26,1699.42 1492.03,1702.09 1499.81,1680.73 1507.33,1699.42 1515.10,1703.87 1522.63,1659.37 1530.40,1702.98 1538.18,1702.09 1545.20,1694.08 1552.98,1702.09 1560.50,1702.98 1568.28,1686.51 1575.80,1703.42 1583.57,1703.42 1591.35,1694.08 1598.87,1697.64 1606.65,1706.54 1614.17,1680.28 1621.95,1703.87 1629.72,1697.64 1637.00,1695.86 1644.77,1702.53 1652.29,1702.53 1660.07,1694.08 1667.59,1699.42 1675.37,1702.09 1683.14,1680.28 1690.67,1702.98 1698.44,1705.20 1705.97,1689.63 1713.74,1702.53 1721.52,1698.53 1728.54,1693.19 1736.31,1699.42 1743.84,1699.42 1751.61,1690.07 1759.14,1701.20 1766.91,1702.09 1774.69,1688.21 1782.21,1696.30 1789.99,1693.19 1797.51,1693.19 1805.29,1701.91 1813.06,1703.16 1820.08,1692.57 1827.86,1700.67 1835.38,1700.67 1843.16,1689.45 1850.68,1699.42 1858.46,1697.64 1866.23,1693.19 1873.75,1629.11 1881.53,1593.51 1889.05,1690.52 1896.83,1700.67 1904.60,1698.80 1911.63,1690.70 1919.40,1699.42 1926.93,1700.67 1934.70,1696.30 1942.22,1700.67 1950.00,1690.70 1957.77,1694.44 1965.30,1699.42 1973.07,1697.55 1980.60,1692.57 1988.37,1693.19 1996.15,1659.37 2003.42,1692.57 2011.20,1697.73 2018.72,1697.73 2026.49,1679.13 2034.02,1695.24 2041.79,1689.01 2049.57,1693.99 2057.09,1695.24 2064.87,1689.01 2072.39,1692.83 2080.17,1692.30 2087.94,1697.73 2094.96,1690.88 2102.74,1696.48 2110.26,1695.86 2118.04,1689.63 2125.56,1696.48 2133.34,1696.48 2141.11,1693.37 2148.64,1698.97 2156.41,1701.47 2163.93,1697.73 2171.71,1681.62 2179.48,1699.60 2186.51,1695.86 2194.28,1697.73 2201.81,1698.97 2209.58,1694.61 2217.11,1697.73 2224.88,1694.61 2232.66,1693.37 2240.18,1697.73 2247.95,1698.97 2255.48,1695.86 2263.25,1698.35 2271.03,1698.97 2278.05,1690.25 2285.83,1696.48 2293.35,1697.73 2301.12,1693.63 2308.65,1695.86 2316.42,1696.48 2324.20,1692.30 2331.72,1698.35 2339.50,1698.35 2347.02,1687.85 2354.80,1695.24 2362.57,1696.48 2369.84,1694.61 2377.62,1697.73 2385.14,1692.83 2392.92,1693.99 2400.44,1693.99 2408.22,1693.99 2415.99,1680.37 2423.52,1696.48 2431.29,1695.86 2438.82,1693.99 2446.59,1697.11 2454.37,1698.35 2461.39,1693.37 2469.16,1696.48 2476.69,1690.25 2484.46,1687.14 2491.99,1697.11 2499.76,1695.24 2507.54,1690.25 2515.06,1697.73 2522.84,1697.73 2530.36,1695.24 2538.13,1693.99 2545.91,1698.35 2552.93,1691.68 2560.71,1697.73 2568.23,1690.25 2576.01,1695.86 2583.53,1697.11 2591.30,1696.48 2599.08,1693.63 2606.60,1697.73 2614.38,1697.11 2621.90,1691.68 2629.68,1698.35 2637.45,1698.35 2644.48,1695.86 2652.25,1697.73 2659.77,1695.86 2667.55,1693.37 2675.07,1693.99 2682.85,1695.24 2690.62,1690.25 2698.15,1695.24 2705.92,1696.48 2713.45,1693.99 2721.22,1692.30 2729.00,1693.99 2736.27,1685.89 2744.04,1692.83 2751.57,1692.83 2759.34,1690.25 2766.87,1690.88 2774.64,1689.01 2782.42,1689.01 2789.94,1687.85 2797.72,1689.01 2805.24,1686.51 2813.02,1688.38 2820.79,1692.30 2827.81,1685.27 2835.59,1687.85 2843.11,1683.40 2850.89,1672.36 2858.41,1680.37 2866.19,1684.73 2873.96,1689.18 2881.49,1687.85 2889.26,1693.63 2896.78,1690.52 2904.56,1693.19 2912.33,1692.74 2919.36,1689.45 2927.13,1692.74 2934.66,1696.13 2942.43,1693.19 2949.95,1696.13 2957.73,1695.86 2965.50,1697.37 2973.03,1686.96 2980.80,1696.93 2988.33,1698.62 2996.10,1682.78 3003.88,1699.42 3010.90,1709.39" fill="none" stroke="#0f5598" stroke-width="4" stroke-linejoin="round" stroke-linecap="round"/>
<rect x="858" y="1689.8" width="2152" height="2.4" fill="#f2bb24"/>
<rect x="857" y="1709.7" width="2155" height="2" fill="#1a1a1a"/>
<rect x="857.50" y="1700" width="2" height="10.7" fill="#1a1a1a"/>
<text x="0" y="0" font-size="19.5" fill="#1a1a1a" text-anchor="end" transform="translate(861.00,1729.70) rotate(-45)">Sep 1, 1999</text>
<rect x="888.10" y="1700" width="2" height="10.7" fill="#1a1a1a"/>
<text x="0" y="0" font-size="19.5" fill="#1a1a1a" text-anchor="end" transform="translate(891.60,1729.70) rotate(-45)">Jan 1, 2000</text>
<rect x="933.74" y="1700" width="2" height="10.7" fill="#1a1a1a"/>
<text x="0" y="0" font-size="19.5" fill="#1a1a1a" text-anchor="end" transform="translate(937.24,1729.70) rotate(-45)">Jul 1, 2000</text>
<rect x="979.89" y="1700" width="2" height="10.7" fill="#1a1a1a"/>
<text x="0" y="0" font-size="19.5" fill="#1a1a1a" text-anchor="end" transform="translate(983.39,1729.70) rotate(-45)">Jan 1, 2001</text>
<rect x="1025.29" y="1700" width="2" height="10.7" fill="#1a1a1a"/>
<text x="0" y="0" font-size="19.5" fill="#1a1a1a" text-anchor="end" transform="translate(1028.79,1729.70) rotate(-45)">Jul 1, 2001</text>
<rect x="1071.44" y="1700" width="2" height="10.7" fill="#1a1a1a"/>
<text x="0" y="0" font-size="19.5" fill="#1a1a1a" text-anchor="end" transform="translate(1074.94,1729.70) rotate(-45)">Jan 1, 2002</text>
<rect x="1116.83" y="1700" width="2" height="10.7" fill="#1a1a1a"/>
<text x="0" y="0" font-size="19.5" fill="#1a1a1a" text-anchor="end" transform="translate(1120.33,1729.70) rotate(-45)">Jul 1, 2002</text>
<rect x="1162.98" y="1700" width="2" height="10.7" fill="#1a1a1a"/>
<text x="0" y="0" font-size="19.5" fill="#1a1a1a" text-anchor="end" transform="translate(1166.48,1729.70) rotate(-45)">Jan 1, 2003</text>
<rect x="1208.37" y="1700" width="2" height="10.7" fill="#1a1a1a"/>
<text x="0" y="0" font-size="19.5" fill="#1a1a1a" text-anchor="end" transform="translate(1211.87,1729.70) rotate(-45)">Jul 1, 2003</text>
<rect x="1254.52" y="1700" width="2" height="10.7" fill="#1a1a1a"/>
<text x="0" y="0" font-size="19.5" fill="#1a1a1a" text-anchor="end" transform="translate(1258.02,1729.70) rotate(-45)">Jan 1, 2004</text>
<rect x="1300.17" y="1700" width="2" height="10.7" fill="#1a1a1a"/>
<text x="0" y="0" font-size="19.5" fill="#1a1a1a" text-anchor="end" transform="translate(1303.67,1729.70) rotate(-45)">Jul 1, 2004</text>
<rect x="1346.32" y="1700" width="2" height="10.7" fill="#1a1a1a"/>
<text x="0" y="0" font-size="19.5" fill="#1a1a1a" text-anchor="end" transform="translate(1349.82,1729.70) rotate(-45)">Jan 1, 2005</text>
<rect x="1391.71" y="1700" width="2" height="10.7" fill="#1a1a1a"/>
<text x="0" y="0" font-size="19.5" fill="#1a1a1a" text-anchor="end" transform="translate(1395.21,1729.70) rotate(-45)">Jul 1, 2005</text>
<rect x="1437.86" y="1700" width="2" height="10.7" fill="#1a1a1a"/>
<text x="0" y="0" font-size="19.5" fill="#1a1a1a" text-anchor="end" transform="translate(1441.36,1729.70) rotate(-45)">Jan 1, 2006</text>
<rect x="1483.26" y="1700" width="2" height="10.7" fill="#1a1a1a"/>
<text x="0" y="0" font-size="19.5" fill="#1a1a1a" text-anchor="end" transform="translate(1486.76,1729.70) rotate(-45)">Jul 1, 2006</text>
<rect x="1529.40" y="1700" width="2" height="10.7" fill="#1a1a1a"/>
<text x="0" y="0" font-size="19.5" fill="#1a1a1a" text-anchor="end" transform="translate(1532.90,1729.70) rotate(-45)">Jan 1, 2007</text>
<rect x="1574.80" y="1700" width="2" height="10.7" fill="#1a1a1a"/>
<text x="0" y="0" font-size="19.5" fill="#1a1a1a" text-anchor="end" transform="translate(1578.30,1729.70) rotate(-45)">Jul 1, 2007</text>
<rect x="1620.95" y="1700" width="2" height="10.7" fill="#1a1a1a"/>
<text x="0" y="0" font-size="19.5" fill="#1a1a1a" text-anchor="end" transform="translate(1624.45,1729.70) rotate(-45)">Jan 1, 2008</text>
<rect x="1666.59" y="1700" width="2" height="10.7" fill="#1a1a1a"/>
<text x="0" y="0" font-size="19.5" fill="#1a1a1a" text-anchor="end" transform="translate(1670.09,1729.70) rotate(-45)">Jul 1, 2008</text>
<rect x="1712.74" y="1700" width="2" height="10.7" fill="#1a1a1a"/>
<text x="0" y="0" font-size="19.5" fill="#1a1a1a" text-anchor="end" transform="translate(1716.24,1729.70) rotate(-45)">Jan 1, 2009</text>
<rect x="1758.14" y="1700" width="2" height="10.7" fill="#1a1a1a"/>
<text x="0" y="0" font-size="19.5" fill="#1a1a1a" text-anchor="end" transform="translate(1761.64,1729.70) rotate(-45)">Jul 1, 2009</text>
<rect x="1804.29" y="1700" width="2" height="10.7" fill="#1a1a1a"/>
<text x="0" y="0" font-size="19.5" fill="#1a1a1a" text-anchor="end" transform="translate(1807.79,1729.70) rotate(-45)">Jan 1, 2010</text>
<rect x="1849.68" y="1700" width="2" height="10.7" fill="#1a1a1a"/>
<text x="0" y="0" font-size="19.5" fill="#1a1a1a" text-anchor="end" transform="translate(1853.18,1729.70) rotate(-45)">Jul 1, 2010</text>
<rect x="1895.83" y="1700" width="2" height="10.7" fill="#1a1a1a"/>
<text x="0" y="0" font-size="19.5" fill="#1a1a1a" text-anchor="end" transform="translate(1899.33,1729.70) rotate(-45)">Jan 1, 2011</text>
<rect x="1941.22" y="1700" width="2" height="10.7" fill="#1a1a1a"/>
<text x="0" y="0" font-size="19.5" fill="#1a1a1a" text-anchor="end" transform="translate(1944.72,1729.70) rotate(-45)">Jul 1, 2011</text>
<rect x="1987.37" y="1700" width="2" height="10.7" fill="#1a1a1a"/>
<text x="0" y="0" font-size="19.5" fill="#1a1a1a" text-anchor="end" transform="translate(1990.87,1729.70) rotate(-45)">Jan 1, 2012</text>
<rect x="2033.02" y="1700" width="2" height="10.7" fill="#1a1a1a"/>
<text x="0" y="0" font-size="19.5" fill="#1a1a1a" text-anchor="end" transform="translate(2036.52,1729.70) rotate(-45)">Jul 1, 2012</text>
<rect x="2079.17" y="1700" width="2" height="10.7" fill="#1a1a1a"/>
<text x="0" y="0" font-size="19.5" fill="#1a1a1a" text-anchor="end" transform="translate(2082.67,1729.70) rotate(-45)">Jan 1, 2013</text>
<rect x="2124.56" y="1700" width="2" height="10.7" fill="#1a1a1a"/>
<text x="0" y="0" font-size="19.5" fill="#1a1a1a" text-anchor="end" transform="translate(2128.06,1729.70) rotate(-45)">Jul 1, 2013</text>
<rect x="2170.71" y="1700" width="2" height="10.7" fill="#1a1a1a"/>
<text x="0" y="0" font-size="19.5" fill="#1a1a1a" text-anchor="end" transform="translate(2174.21,1729.70) rotate(-45)">Jan 1, 2014</text>
<rect x="2216.11" y="1700" width="2" height="10.7" fill="#1a1a1a"/>
<text x="0" y="0" font-size="19.5" fill="#1a1a1a" text-anchor="end" transform="translate(2219.61,1729.70) rotate(-45)">Jul 1, 2014</text>
<rect x="2262.25" y="1700" width="2" height="10.7" fill="#1a1a1a"/>
<text x="0" y="0" font-size="19.5" fill="#1a1a1a" text-anchor="end" transform="translate(2265.75,1729.70) rotate(-45)">Jan 1, 2015</text>
<rect x="2307.65" y="1700" width="2" height="10.7" fill="#1a1a1a"/>
<text x="0" y="0" font-size="19.5" fill="#1a1a1a" text-anchor="end" transform="translate(2311.15,1729.70) rotate(-45)">Jul 1, 2015</text>
<rect x="2353.80" y="1700" width="2" height="10.7" fill="#1a1a1a"/>
<text x="0" y="0" font-size="19.5" fill="#1a1a1a" text-anchor="end" transform="translate(2357.30,1729.70) rotate(-45)">Jan 1, 2016</text>
<rect x="2399.44" y="1700" width="2" height="10.7" fill="#1a1a1a"/>
<text x="0" y="0" font-size="19.5" fill="#1a1a1a" text-anchor="end" transform="translate(2402.94,1729.70) rotate(-45)">Jul 1, 2016</text>
<rect x="2445.59" y="1700" width="2" height="10.7" fill="#1a1a1a"/>
<text x="0" y="0" font-size="19.5" fill="#1a1a1a" text-anchor="end" transform="translate(2449.09,1729.70) rotate(-45)">Jan 1, 2017</text>
<rect x="2490.99" y="1700" width="2" height="10.7" fill="#1a1a1a"/>
<text x="0" y="0" font-size="19.5" fill="#1a1a1a" text-anchor="end" transform="translate(2494.49,1729.70) rotate(-45)">Jul 1, 2017</text>
<rect x="2537.13" y="1700" width="2" height="10.7" fill="#1a1a1a"/>
<text x="0" y="0" font-size="19.5" fill="#1a1a1a" text-anchor="end" transform="translate(2540.63,1729.70) rotate(-45)">Jan 1, 2018</text>
<rect x="2582.53" y="1700" width="2" height="10.7" fill="#1a1a1a"/>
<text x="0" y="0" font-size="19.5" fill="#1a1a1a" text-anchor="end" transform="translate(2586.03,1729.70) rotate(-45)">Jul 1, 2018</text>
<rect x="2628.68" y="1700" width="2" height="10.7" fill="#1a1a1a"/>
<text x="0" y="0" font-size="19.5" fill="#1a1a1a" text-anchor="end" transform="translate(2632.18,1729.70) rotate(-45)">Jan 1, 2019</text>
<rect x="2674.07" y="1700" width="2" height="10.7" fill="#1a1a1a"/>
<text x="0" y="0" font-size="19.5" fill="#1a1a1a" text-anchor="end" transform="translate(2677.57,1729.70) rotate(-45)">Jul 1, 2019</text>
<rect x="2720.22" y="1700" width="2" height="10.7" fill="#1a1a1a"/>
<text x="0" y="0" font-size="19.5" fill="#1a1a1a" text-anchor="end" transform="translate(2723.72,1729.70) rotate(-45)">Jan 1, 2020</text>
<rect x="2765.87" y="1700" width="2" height="10.7" fill="#1a1a1a"/>
<text x="0" y="0" font-size="19.5" fill="#1a1a1a" text-anchor="end" transform="translate(2769.37,1729.70) rotate(-45)">Jul 1, 2020</text>
<rect x="2812.02" y="1700" width="2" height="10.7" fill="#1a1a1a"/>
<text x="0" y="0" font-size="19.5" fill="#1a1a1a" text-anchor="end" transform="translate(2815.52,1729.70) rotate(-45)">Jan 1, 2021</text>
<rect x="2857.41" y="1700" width="2" height="10.7" fill="#1a1a1a"/>
<text x="0" y="0" font-size="19.5" fill="#1a1a1a" text-anchor="end" transform="translate(2860.91,1729.70) rotate(-45)">Jul 1, 2021</text>
<rect x="2903.56" y="1700" width="2" height="10.7" fill="#1a1a1a"/>
<text x="0" y="0" font-size="19.5" fill="#1a1a1a" text-anchor="end" transform="translate(2907.06,1729.70) rotate(-45)">Jan 1, 2022</text>
<rect x="2948.95" y="1700" width="2" height="10.7" fill="#1a1a1a"/>
<text x="0" y="0" font-size="19.5" fill="#1a1a1a" text-anchor="end" transform="translate(2952.45,1729.70) rotate(-45)">Jul 1, 2022</text>
<rect x="3009.90" y="1700" width="2" height="10.7" fill="#1a1a1a"/>
<text x="0" y="0" font-size="19.5" fill="#1a1a1a" text-anchor="end" transform="translate(3013.40,1729.70) rotate(-45)">Mar 1, 2023</text>
<text x="2999" y="1723" font-size="27" fill="#f2bb24" text-anchor="end" textLength="90" lengthAdjust="spacingAndGlyphs">2.087%</text>
<text x="0" y="0" font-size="28" fill="#1a1a1a" text-anchor="middle" transform="translate(726,1569.4) rotate(-90)" textLength="325" lengthAdjust="spacingAndGlyphs">Average Prepayment (%)</text>
<text x="1787.2" y="1904.8" font-size="28.5" fill="#1a1a1a" textLength="222" lengthAdjust="spacingAndGlyphs">Reporting Period</text>
</svg>
</body></html>
